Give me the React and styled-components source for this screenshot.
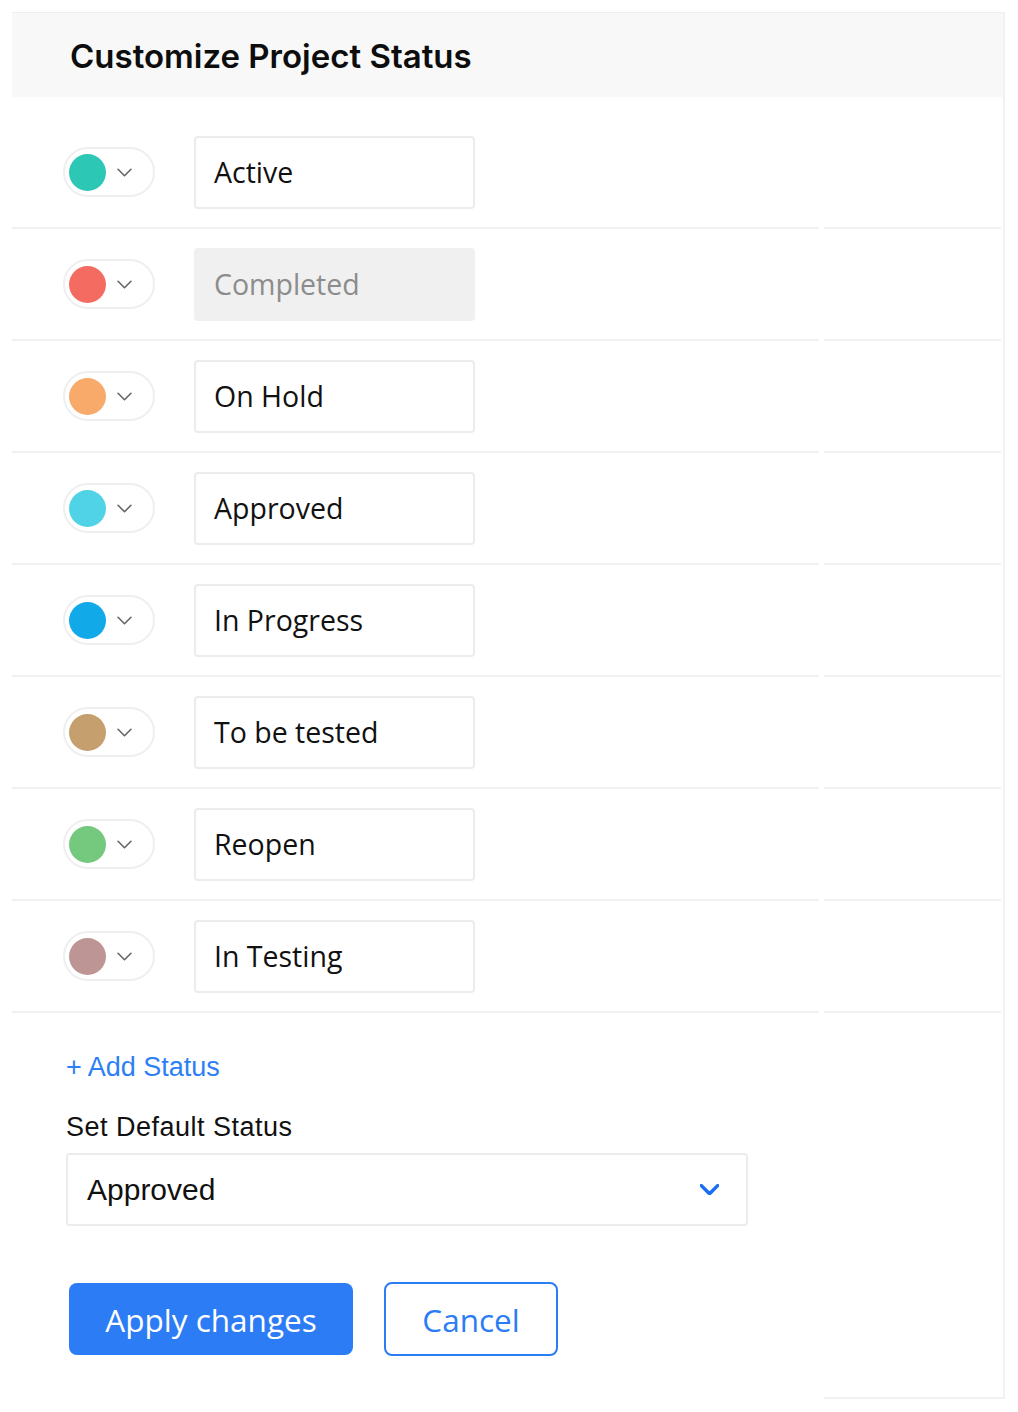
import React from 'react';
import styled, { createGlobalStyle } from 'styled-components';

const statuses = [
    { name: 'Active', color: '#2cc7b5' },
    { name: 'Completed', color: '#f46b62', locked: true },
    { name: 'On Hold', color: '#f8aa6b' },
    { name: 'Approved', color: '#50d3e6' },
    { name: 'In Progress', color: '#12a9e9' },
    { name: 'To be tested', color: '#c59f6d' },
    { name: 'Reopen', color: '#74c97e' },
    { name: 'In Testing', color: '#bc9594' },
];

const Chevron = ({ color, size = 14, weight = 1.6 }) => (
    <svg width={size} height={size * 0.6} viewBox="0 0 14 8" fill="none">
        <path d="M1 1l6 6 6-6" stroke={color} strokeWidth={weight} strokeLinecap="round" strokeLinejoin="round" />
    </svg>
);

const App = () => {
    return (
        <>
            <GlobalStyle />
            <Panel>
                <Header>
                    <Title>Customize Project Status</Title>
                </Header>
                <List>
                    {statuses.map((s) => (
                        <Row key={s.name}>
                            <MainCell>
                                <ColorPicker>
                                    <Dot color={s.color} />
                                    <Chevron color="#666" size={15} weight={1.5} />
                                </ColorPicker>
                                <NameInput locked={s.locked}>{s.name}</NameInput>
                            </MainCell>
                            <SideCell />
                        </Row>
                    ))}
                </List>
                <Footer>
                    <FooterMain>
                        <AddLink>+ Add Status</AddLink>
                        <Label>Set Default Status</Label>
                        <Select>
                            <span>Approved</span>
                            <Chevron color="#1a6ef2" size={19} weight={2.6} />
                        </Select>
                        <Actions>
                            <PrimaryButton>Apply changes</PrimaryButton>
                            <GhostButton>Cancel</GhostButton>
                        </Actions>
                    </FooterMain>
                    <FooterSide />
                </Footer>
            </Panel>
        </>
    );
};

export default App;

// CSS STYLING

const GlobalStyle = createGlobalStyle`
    body {
        margin: 0;
        background: #fff;
        font-family: "Liberation Sans", Arial, sans-serif;
        color: #111;
    }
`;

const Panel = styled.div`
    margin: 12px 0 0 12px;
    width: 991px;
    border-top: 1px solid #efefef;
    border-right: 2px solid #f2f2f2;
`;

const Header = styled.div`
    height: 84px;
    background: #f8f8f8;
    display: flex;
    align-items: center;
    padding-left: 58px;
`;

const Title = styled.h1`
    margin: 0;
    font-family: Inter, sans-serif;
    font-size: 33px;
    font-weight: 600;
    letter-spacing: 0;
    color: #0d0d0d;
    padding-top: 2px;
`;

const List = styled.div`
    padding-top: 20px;
`;

const Row = styled.div`
    display: grid;
    grid-template-columns: 807px 1fr;
    column-gap: 5px;
`;

const MainCell = styled.div`
    height: 110px;
    border-bottom: 2px solid #f1f1f1;
    display: flex;
    align-items: center;
    padding-left: 51px;
    gap: 39px;
`;

const SideCell = styled.div`
    border-bottom: 2px solid #f1f1f1;
    margin-right: 2px;
`;

const ColorPicker = styled.div`
    width: 92px;
    height: 50px;
    box-sizing: border-box;
    border: 2px solid #efefef;
    border-radius: 25px;
    display: flex;
    align-items: center;
    padding-left: 4px;
    gap: 11px;
`;

const Dot = styled.span`
    width: 37px;
    height: 37px;
    border-radius: 50%;
    background: ${(p) => p.color};
`;

const NameInput = styled.div`
    width: 281px;
    height: 73px;
    box-sizing: border-box;
    border: 2px solid ${(p) => (p.locked ? '#f0f0f0' : '#ececec')};
    border-radius: 4px;
    background: ${(p) => (p.locked ? '#f0f0f0' : '#fff')};
    color: ${(p) => (p.locked ? '#8c8c8c' : '#111')};
    display: flex;
    align-items: center;
    padding-left: 18px;
    font-family: "Open Sans", sans-serif;
    font-size: 28.5px;
`;

const Footer = styled.div`
    display: grid;
    grid-template-columns: 807px 1fr;
    column-gap: 5px;
`;

const FooterMain = styled.div`
    padding: 39px 0 0 54px;
    display: flex;
    flex-direction: column;
    align-items: flex-start;
    height: 347px;
`;

const FooterSide = styled.div`
    border-bottom: 2px solid #f1f1f1;
`;

const AddLink = styled.a`
    color: #2d7ff5;
    font-size: 27px;
    cursor: pointer;
`;

const Label = styled.div`
    margin-top: 29px;
    font-size: 27px;
    color: #111;
    letter-spacing: 0.5px;
`;

const Select = styled.div`
    margin-top: 10px;
    width: 682px;
    height: 73px;
    box-sizing: border-box;
    border: 2px solid #ececec;
    border-radius: 4px;
    display: flex;
    align-items: center;
    justify-content: space-between;
    padding: 0 27px 0 19px;
    font-size: 30px;
    color: #111;
`;

const Actions = styled.div`
    margin-top: 57px;
    margin-left: 3px;
    display: flex;
    gap: 31px;
`;

const PrimaryButton = styled.button`
    width: 284px;
    height: 72px;
    border: none;
    border-radius: 8px;
    background: #2c7cf6;
    color: #fff;
    font-family: "Open Sans", sans-serif;
    font-size: 31.5px;
    cursor: pointer;
`;

const GhostButton = styled.button`
    width: 174px;
    height: 74px;
    margin-top: -1px;
    border: 2px solid #2c7cf6;
    border-radius: 8px;
    background: #fff;
    color: #2c7cf6;
    font-family: "Open Sans", sans-serif;
    font-size: 31.5px;
    cursor: pointer;
`;
